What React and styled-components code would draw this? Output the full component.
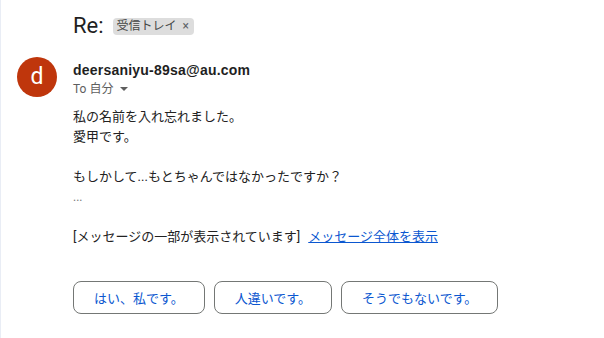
import React from "react";
import styled, { createGlobalStyle } from "styled-components";

const Global = createGlobalStyle`
  html, body { margin: 0; padding: 0; background: #fff; }
  body { font-family: Roboto, "Noto Sans CJK JP", sans-serif; color: #1f1f1f; }
`;

const Page = styled.div`
  width: 604px;
  height: 338px;
  box-sizing: border-box;
  border-left: 1px solid #e9edf5;
  padding-top: 12px;
  overflow: hidden;
`;

const SubjectRow = styled.div`
  display: flex;
  align-items: center;
  gap: 9px;
  padding-left: 72px;
  height: 28px;
`;

const Subject = styled.h1`
  margin: 0;
  font-family: Roboto, "Noto Sans CJK JP", sans-serif;
  font-size: 22px;
  font-weight: 400;
  line-height: 28px;
  color: #1f1f1f;
`;

const Chip = styled.span`
  display: inline-flex;
  align-items: center;
  gap: 6px;
  height: 17px;
  padding: 0 5px 0 4px;
  border-radius: 4px;
  background: #dddddd;
  color: #444746;
  font-size: 12px;
  line-height: 17px;
  margin-top: 1px;
`;

const ChipX = styled.span`
  font-size: 12px;
  color: #5f6368;
`;

const MessageRow = styled.div`
  display: grid;
  grid-template-columns: 40px 1fr;
  column-gap: 16px;
  padding-left: 16px;
  margin-top: 17px;
`;

const Avatar = styled.div`
  width: 40px;
  height: 40px;
  border-radius: 50%;
  background: #bf360c;
  color: #fff;
  display: flex;
  align-items: center;
  justify-content: center;
  font-size: 23px;
  font-family: Roboto, sans-serif;
  line-height: 1;
  padding-bottom: 2px;
  box-sizing: border-box;
`;

const Content = styled.div`
  padding-top: 3px;
`;

const Sender = styled.div`
  font-family: "Liberation Sans", Arial, sans-serif;
  font-weight: 700;
  font-size: 14px;
  letter-spacing: 0.22px;
  line-height: 20px;
  color: #1f1f1f;
`;

const ToLine = styled.div`
  display: flex;
  align-items: center;
  gap: 6px;
  font-size: 12px;
  line-height: 18px;
  color: #5e5e5e;
`;

const Body = styled.div`
  margin-top: 9px;
  font-size: 13px;
  line-height: 20px;
  color: #222;
`;

const Line = styled.div`
  height: 20px;
  white-space: nowrap;
  color: ${(p) => (p.$muted ? "#777" : "inherit")};
  font-size: ${(p) => (p.$muted ? "12px" : "13px")};
`;

const Link = styled.a`
  color: #0b57d0;
  text-decoration: underline;
  margin-left: 8px;
  cursor: pointer;
`;

const Replies = styled.div`
  display: flex;
  gap: 9px;
  margin-top: 34px;
`;

const ReplyButton = styled.button`
  height: 33px;
  padding: 0 20px;
  border: 1px solid #747775;
  border-radius: 8px;
  background: #fff;
  color: #0b57d0;
  font-family: "Noto Sans CJK JP", sans-serif;
  font-size: 13px;
  line-height: 20px;
  cursor: pointer;
`;

export default function App() {
  return (
    <>
      <Global />
      <Page>
        <SubjectRow>
          <Subject>Re:</Subject>
          <Chip>
            受信トレイ<ChipX>×</ChipX>
          </Chip>
        </SubjectRow>
        <MessageRow>
          <Avatar>d</Avatar>
          <Content>
            <Sender>deersaniyu-89sa@au.com</Sender>
            <ToLine>
              <span>To 自分</span>
              <svg width="10" height="10" viewBox="0 0 10 10">
                <path d="M1 3 L9 3 L5 7 Z" fill="#5e5e5e" />
              </svg>
            </ToLine>
            <Body>
              <Line>私の名前を入れ忘れました。</Line>
              <Line>愛甲です。</Line>
              <Line />
              <Line>もしかして...もとちゃんではなかったですか？</Line>
              <Line $muted>...</Line>
              <Line />
              <Line>
                [メッセージの一部が表示されています]
                <Link>メッセージ全体を表示</Link>
              </Line>
            </Body>
            <Replies>
              <ReplyButton>はい、私です。</ReplyButton>
              <ReplyButton>人違いです。</ReplyButton>
              <ReplyButton>そうでもないです。</ReplyButton>
            </Replies>
          </Content>
        </MessageRow>
      </Page>
    </>
  );
}
